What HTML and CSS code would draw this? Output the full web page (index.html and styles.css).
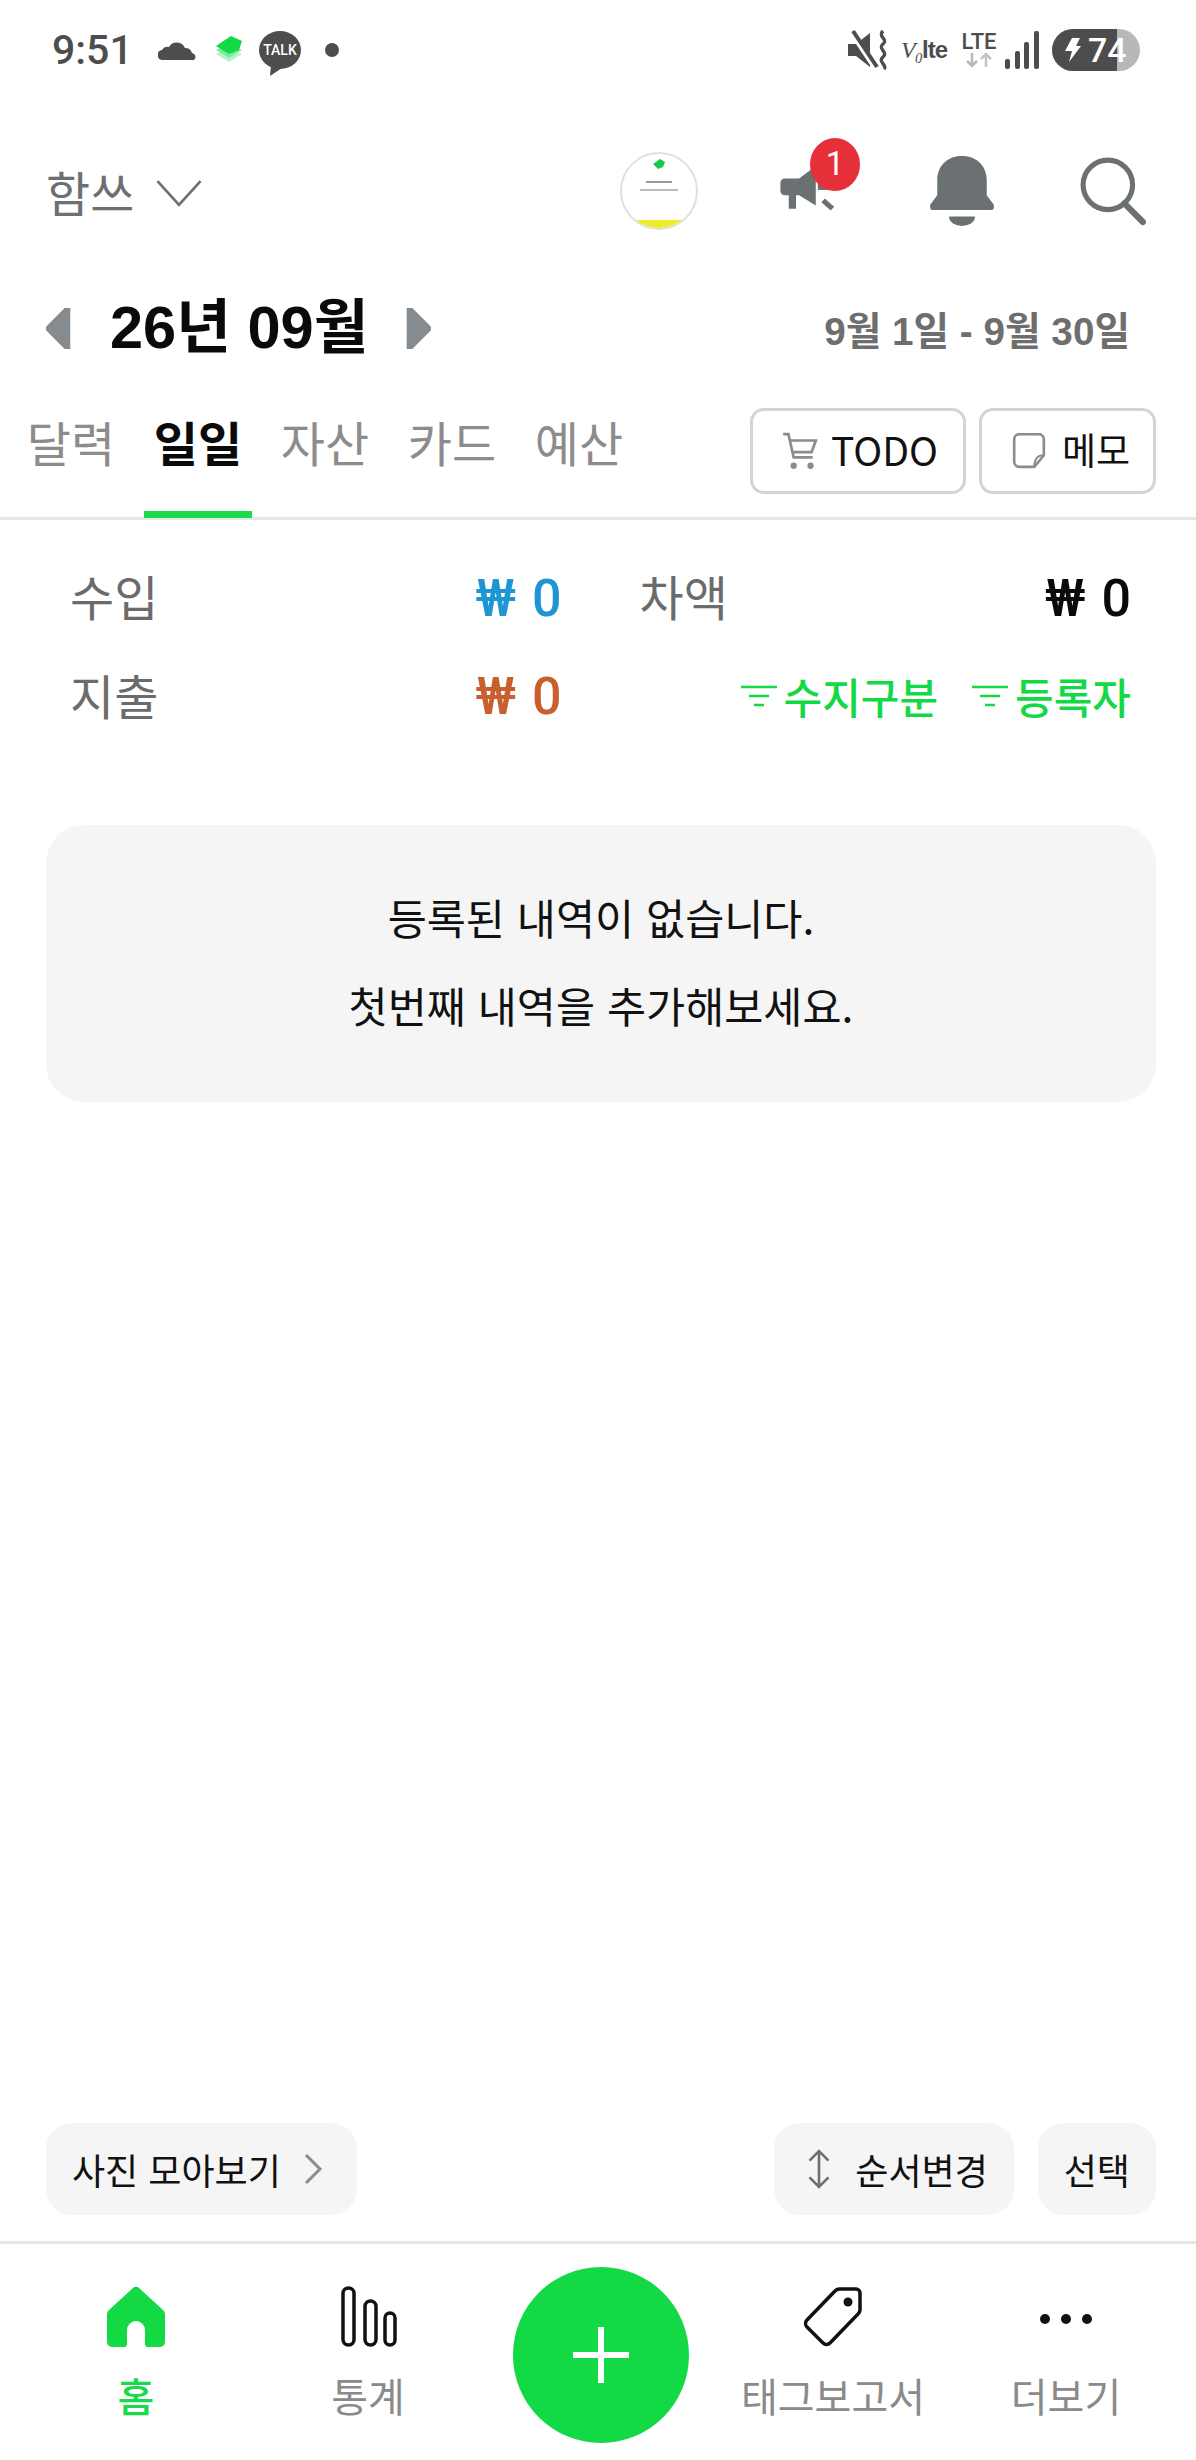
FILE: index.html
```html
<!DOCTYPE html>
<html lang="ko">
<head>
    <meta charset="UTF-8">
    <meta name="viewport" content="width=device-width, initial-scale=1.0">
    <title>가계부</title>
    <link rel="stylesheet" href="styles.css">
</head>
<body>
    <div class="app">
        <div class="status-bar">
            <span class="clock">9:51</span>
            <svg class="st-cloud" width="40" height="24" viewBox="0 0 40 24"><path d="M5 22a5 5 0 0 1-1-10 7 7 0 0 1 7-3 9 9 0 0 1 16 1 7 7 0 0 1 7 5 4 4 0 0 1 2 7z" fill="#4d4d4d"/></svg>
            <svg class="st-app" width="30" height="30" viewBox="0 0 30 30"><path d="M1 19l12-6 14 6-13 8z" fill="#b5f3c8"/><path d="M1 15l12-6 14 6-13 8z" fill="#7eea9f"/><path d="M1 11L16 1l11 5-3 9-10 4z" fill="#12d944"/></svg>
            <svg class="talk" width="42" height="46" viewBox="0 0 42 46"><ellipse cx="21" cy="19" rx="21" ry="19" fill="#4d4d4d"/><path d="M12 34l-1 11 12-8z" fill="#4d4d4d"/><text x="21" y="24" text-anchor="middle" font-family="Roboto, sans-serif" font-size="14" font-weight="500" fill="#fff">TALK</text></svg>
            <span class="st-dot"></span>
            <span class="spacer"></span>
            <svg class="st-mute" width="40" height="42" viewBox="0 0 40 42"><path d="M0 15h8l14-11v34L8 27H0z" fill="#4d4d4d"/><path d="M3 2l24 36" stroke="#fff" stroke-width="6"/><path d="M5 2l24 36" stroke="#4d4d4d" stroke-width="4"/><path d="M35 2c-6 6 6 8 0 13s6 8 0 13 5 8 1 12" stroke="#4d4d4d" stroke-width="3.5" fill="none"/></svg>
            <span class="volte"><i>V₀</i><b>lte</b></span>
            <span class="lte">LTE<svg width="28" height="16" viewBox="0 0 28 16"><path d="M7 1v13M2 9l5 5 5-5" stroke="#b8b8b8" stroke-width="2.5" fill="none"/><path d="M21 15V2M16 7l5-5 5 5" stroke="#c4c4c4" stroke-width="2.5" fill="none"/></svg></span>
            <svg class="st-signal" width="34" height="38" viewBox="0 0 34 38"><g fill="#4d4d4d"><rect x="0" y="28" width="5" height="10" rx="2"/><rect x="10" y="20" width="5" height="18" rx="2"/><rect x="19" y="11" width="5" height="27" rx="2"/><rect x="29" y="0" width="5" height="38" rx="2"/></g></svg>
            <span class="battery"><span class="battery-fill"></span><svg class="bolt" width="16" height="24" viewBox="0 0 16 24"><path d="M7 0h8l-4 8h5L4 24l3-11H0z" fill="#fff"/></svg><span class="battery-num">74</span></span>
        </div>

        <div class="top-bar">
            <div class="book">함쓰<svg class="chev" width="46" height="28" viewBox="0 0 42 26"><path d="M1 2l20 22L41 2" stroke="#6b7073" stroke-width="2.5" fill="none"/></svg></div>
            <div class="top-icons">
                <div class="avatar">
                    <svg width="12" height="10" viewBox="0 0 12 10"><path d="M0 5l7-5 5 3-2 5-5 2z" fill="#18c94a"/></svg>
                    <span class="avatar-line avatar-line-a"></span>
                    <span class="avatar-line avatar-line-b"></span>
                    <span class="avatar-foot"></span>
                </div>
                <div class="notice">
                    <svg width="63" height="52" viewBox="0 0 58 50"><path d="M2 17a4 4 0 0 1 4-4h14L36 1v38L20 29h-3v13h-7V29H6a4 4 0 0 1-4-4z" fill="#6b7073"/><rect x="38" y="10" width="11" height="14" fill="#6b7073"/><path d="M43 34l9 8" stroke="#6b7073" stroke-width="5"/></svg>
                    <span class="badge">1</span>
                </div>
                <svg class="bell" width="66" height="72" viewBox="0 0 56 68" preserveAspectRatio="none"><path d="M28 1c-13 0-21 10-21 23v14L1 47v3a2 2 0 0 0 2 2h50a2 2 0 0 0 2-2v-3l-6-9V24C49 11 41 1 28 1z" fill="#6b7073"/><path d="M17 58h22a11 9 0 0 1-22 0z" fill="#6b7073"/></svg>
                <svg class="search" width="66" height="70" viewBox="0 0 64 66"><circle cx="27" cy="27" r="24" stroke="#6b7073" stroke-width="5" fill="none"/><path d="M43 45l18 18" stroke="#6b7073" stroke-width="6" stroke-linecap="round"/></svg>
            </div>
        </div>

        <div class="month-row">
            <div class="month-nav">
                <svg width="26" height="41" viewBox="0 0 24 40"><path d="M22 2v36a2 2 0 0 1-4 1L1 22a3 3 0 0 1 0-4L18 1a2 2 0 0 1 4 1z" fill="#858b8e" stroke="#858b8e" stroke-width="2"/></svg>
                <span class="month">26년 09월</span>
                <svg width="26" height="41" viewBox="0 0 24 40"><path d="M2 2v36a2 2 0 0 0 4 1l17-17a3 3 0 0 0 0-4L6 1a2 2 0 0 0-4 1z" fill="#858b8e" stroke="#858b8e" stroke-width="2"/></svg>
            </div>
            <span class="range">9월 1일 - 9월 30일</span>
        </div>

        <div class="tab-row">
            <div class="tabs">
                <span class="tab">달력</span>
                <span class="tab active">일일</span>
                <span class="tab">자산</span>
                <span class="tab">카드</span>
                <span class="tab">예산</span>
            </div>
            <div class="tab-btns">
                <button class="outline-btn btn-todo">
                    <svg width="38" height="38" viewBox="0 0 34 36"><path d="M1 2h5l5 22h18M8 8h24l-4 11H11" stroke="#8c8c8c" stroke-width="2.5" fill="none"/><circle cx="11" cy="32" r="3" fill="#8c8c8c"/><circle cx="27" cy="32" r="3" fill="#8c8c8c"/></svg>
                    <span class="btn-label">TODO</span>
                </button>
                <button class="outline-btn btn-memo">
                    <svg width="34" height="36" viewBox="0 0 30 34"><path d="M20 32H6a5 5 0 0 1-5-5V6a5 5 0 0 1 5-5h18a5 5 0 0 1 5 5v15z" stroke="#8c8c8c" stroke-width="2.5" fill="none"/><path d="M20 32c0-7 2-11 9-11" stroke="#8c8c8c" stroke-width="2" fill="none"/></svg>
                    <span class="btn-label">메모</span>
                </button>
            </div>
        </div>

        <div class="summary">
            <div class="sum-row">
                <div class="sum-cell"><span class="sum-label">수입</span><span class="sum-amt income">₩ 0</span></div>
                <div class="sum-cell"><span class="sum-label">차액</span><span class="sum-amt diff">₩ 0</span></div>
            </div>
            <div class="sum-row">
                <div class="sum-cell"><span class="sum-label">지출</span><span class="sum-amt expense">₩ 0</span></div>
                <div class="filters">
                    <span class="filter"><svg width="38" height="24" viewBox="0 0 38 24"><path d="M1 3h36M9 12h20M14 21h10" stroke="#12d944" stroke-width="2.5" fill="none"/></svg>수지구분</span>
                    <span class="filter"><svg width="38" height="24" viewBox="0 0 38 24"><path d="M1 3h36M9 12h20M14 21h10" stroke="#12d944" stroke-width="2.5" fill="none"/></svg>등록자</span>
                </div>
            </div>
        </div>

        <div class="empty-card">
            <p>등록된 내역이 없습니다.</p>
            <p>첫번째 내역을 추가해보세요.</p>
        </div>

        <div class="content-fill"></div>

        <div class="action-row">
            <button class="soft-btn btn-photo">사진 모아보기<svg class="gt" width="20" height="32" viewBox="0 0 18 32"><path d="M2 2l14 14L2 30" stroke="#8c8c8c" stroke-width="3" fill="none"/></svg></button>
            <div class="action-right">
                <button class="soft-btn btn-order"><svg class="updown" width="24" height="40" viewBox="0 0 22 38"><path d="M11 2v34M2 11l9-9 9 9M2 27l9 9 9-9" stroke="#6b7073" stroke-width="2.5" fill="none"/></svg>순서변경</button>
                <button class="soft-btn">선택</button>
            </div>
        </div>

        <nav class="bottom-nav">
            <div class="nav-item nav-active">
                <svg width="60" height="62" viewBox="0 0 60 62"><path d="M27 2L3 24a6 6 0 0 0-2 4v28a5 5 0 0 0 5 5h12a3 3 0 0 0 3-3V44a9 9 0 0 1 18 0v14a3 3 0 0 0 3 3h12a5 5 0 0 0 5-5V28a6 6 0 0 0-2-4L33 2a4 4 0 0 0-6 0z" fill="#12d944"/></svg>
                <span>홈</span>
            </div>
            <div class="nav-item">
                <svg width="60" height="62" viewBox="0 0 60 62"><g fill="none" stroke="#111" stroke-width="3.5"><rect x="5" y="2" width="11" height="57" rx="5.5"/><rect x="27" y="15" width="11" height="44" rx="5.5"/><rect x="47" y="27" width="10" height="32" rx="5"/></g></svg>
                <span>통계</span>
            </div>
            <div class="nav-plus"><svg width="56" height="56" viewBox="0 0 56 56"><path d="M28 0v56M0 28h56" stroke="#fff" stroke-width="6"/></svg></div>
            <div class="nav-item">
                <svg width="60" height="62" viewBox="0 0 60 62"><path d="M36 3h17a4 4 0 0 1 4 4v17a6 6 0 0 1-2 4L27 57a5 5 0 0 1-7 0L4 41a5 5 0 0 1 0-7L32 5a6 6 0 0 1 4-2z" fill="none" stroke="#111" stroke-width="3.5"/><circle cx="45" cy="16" r="4.5" fill="#111"/></svg>
                <span>태그보고서</span>
            </div>
            <div class="nav-item">
                <svg width="60" height="62" viewBox="0 0 60 62"><g fill="#111"><circle cx="9" cy="33" r="5"/><circle cx="30" cy="33" r="5"/><circle cx="51" cy="33" r="5"/></g></svg>
                <span>더보기</span>
            </div>
        </nav>
    </div>
</body>
</html>
```

FILE: styles.css
```css
* { box-sizing: border-box; }
body { margin: 0; background: #fff; font-family: "Noto Sans CJK KR", "Noto Sans", sans-serif; color: #111; }
button { font-family: inherit; }
.app { width: 1196px; height: 2460px; display: flex; flex-direction: column; overflow: hidden; }

.status-bar { height: 100px; display: flex; align-items: center; padding: 0 56px 0 52px; flex-shrink: 0; }
.clock { font-family: Roboto, sans-serif; font-size: 41px; font-weight: 500; color: #4d4d4d; width: 106px; }
.st-cloud { margin-right: 17px; }
.st-app { margin-right: 14px; }
.talk { margin-right: 24px; margin-top: 8px; }
.st-dot { width: 14px; height: 14px; border-radius: 50%; background: #4d4d4d; }
.spacer { flex: 1; }
.st-mute { margin-right: 13px; }
.volte { color: #4d4d4d; font-size: 24px; width: 46px; margin-right: 13px; white-space: nowrap; font-family: "Liberation Serif", serif; letter-spacing: -1px; }
.volte b { font-family: "Liberation Sans", sans-serif; }
.lte { display: flex; flex-direction: column; align-items: center; width: 38px; font-family: Roboto, sans-serif; font-size: 22px; font-weight: 500; line-height: 20px; color: #4d4d4d; margin-right: 7px; }
.st-signal { margin-right: 13px; }
.battery { position: relative; width: 88px; height: 42px; border-radius: 21px; background: #b8b8b8; overflow: hidden; display: flex; align-items: center; padding-left: 13px; }
.battery-fill { position: absolute; left: 0; top: 0; bottom: 0; width: 65px; background: #4d4d4d; }
.bolt { position: relative; margin-right: 7px; }
.battery-num { position: relative; font-family: Roboto, sans-serif; font-size: 34px; font-weight: 500; color: #fff; }

.top-bar { height: 84px; margin-top: 49px; display: flex; align-items: center; justify-content: space-between; padding: 0 50px 0 46px; flex-shrink: 0; }
.book { display: flex; align-items: center; font-size: 48px; color: #6b7073; line-height: 1; }
.chev { margin-left: 22px; margin-top: 4px; }
.top-icons { display: flex; align-items: center; }
.avatar { position: relative; width: 78px; height: 78px; border-radius: 50%; border: 2px solid #e0e0e0; overflow: hidden; display: flex; flex-direction: column; align-items: center; padding-top: 5px; margin-right: 79px; background: #fff; }
.avatar-line { height: 2px; background: #999; display: block; }
.avatar-line-a { width: 26px; margin-top: 12px; }
.avatar-line-b { width: 38px; margin-top: 6px; background: #bbb; }
.avatar-foot { position: absolute; left: 0; right: 0; bottom: 0; height: 8px; background: #ecec2c; }
.notice { position: relative; width: 63px; height: 52px; margin-right: 89px; }
.badge { position: absolute; left: 33px; top: -27px; width: 50px; height: 53px; border-radius: 50%; background: #e5303a; color: #fff; font-size: 33px; font-family: Roboto, sans-serif; line-height: 51px; text-align: center; }
.bell { margin-right: 85px; }

.month-row { height: 60px; margin-top: 65px; display: flex; align-items: center; justify-content: space-between; padding: 0 66px 0 46px; flex-shrink: 0; }
.month-nav { display: flex; align-items: center; }
.month { font-size: 59.5px; font-weight: 700; color: #0a0a0a; margin: 0 37px 0 38px; font-family: "Liberation Sans", "Noto Sans CJK KR", sans-serif; line-height: 60px; }
.range { font-size: 38.7px; font-weight: 700; color: #6e6e6e; font-family: "Liberation Sans", "Noto Sans CJK KR", sans-serif; }

.tab-row { height: 140px; margin-top: 22px; display: flex; align-items: flex-start; justify-content: space-between; padding: 0 40px 0 17px; border-bottom: 3px solid #e6e6e6; flex-shrink: 0; }
.tabs { display: flex; gap: 19px; }
.tab { width: 108px; height: 138px; display: flex; justify-content: center; padding-top: 30px; font-size: 48px; line-height: 62px; color: #8c8c8c; border-bottom: 7px solid transparent; }
.tab.active { color: #0a0a0a; font-weight: 700; border-bottom-color: #1ad94b; }
.tab-btns { display: flex; gap: 13px; padding-top: 28px; }
.outline-btn { height: 86px; border: 3px solid #d4d4d4; border-radius: 14px; background: #fff; display: flex; align-items: center; font-size: 37px; color: #111; padding: 0 0 4px 0; }
.outline-btn svg { margin-top: 4px; }
.btn-todo { width: 216px; gap: 12px; padding-left: 28px; font-size: 39px; }
.btn-memo { width: 177px; gap: 16px; padding-left: 30px; }

.summary { padding: 0 65px 0 70px; margin-top: 29px; flex-shrink: 0; }
.sum-row { display: flex; height: 99px; align-items: center; gap: 78px; }
.sum-cell { flex: 1; display: flex; align-items: center; justify-content: space-between; }
.sum-label { font-size: 48px; color: #6b6b6b; margin-top: -8px; }
.sum-amt { font-size: 52px; font-weight: 500; font-family: Roboto, sans-serif; word-spacing: 3px; }
.income { color: #1e96d2; }
.diff { color: #0a0a0a; }
.expense { color: #c8602d; margin-top: -2px; }
.filters { flex: 1; display: flex; justify-content: flex-end; gap: 33px; margin-top: -4px; }
.filter { display: flex; align-items: center; gap: 6px; color: #12d944; font-size: 42px; font-weight: 500; white-space: nowrap; }

.empty-card { margin: 78px 40px 0 46px; height: 277px; padding-bottom: 6px; background: #f5f5f5; border-radius: 38px; display: flex; flex-direction: column; justify-content: center; align-items: center; gap: 38px; flex-shrink: 0; }
.empty-card p { margin: 0; font-size: 42.5px; line-height: 50px; color: #111; }

.content-fill { flex: 1; }

.action-row { display: flex; justify-content: space-between; padding: 0 40px 0 46px; flex-shrink: 0; }
.action-right { display: flex; gap: 24px; }
.soft-btn { height: 92px; padding: 0 26px; background: #f5f5f5; border: none; border-radius: 26px; display: flex; align-items: center; font-size: 36px; color: #111; white-space: nowrap; }
.btn-photo { padding-right: 34px; }
.btn-order { padding-left: 33px; }
.gt { margin-left: 22px; }
.updown { margin-right: 24px; }

.bottom-nav { position: relative; height: 219px; margin-top: 26px; border-top: 3px solid #e6e6e6; display: flex; flex-shrink: 0; }
.nav-item { display: flex; flex-direction: column; align-items: center; font-size: 40px; color: #8a8a8a; padding-top: 42px; position: absolute; width: 240px; }
.nav-item svg { margin-bottom: 19px; }
.nav-item span { line-height: 56px; white-space: nowrap; }
.nav-item:nth-child(1) { left: 16px; }
.nav-item:nth-child(2) { left: 248px; }
.nav-item:nth-child(4) { left: 713px; }
.nav-item:nth-child(5) { left: 946px; }
.nav-active { color: #1ad94b; font-weight: 500; }
.nav-plus { position: absolute; left: 513px; top: 23px; width: 176px; height: 176px; border-radius: 50%; background: #12d944; display: flex; align-items: center; justify-content: center; }
```
